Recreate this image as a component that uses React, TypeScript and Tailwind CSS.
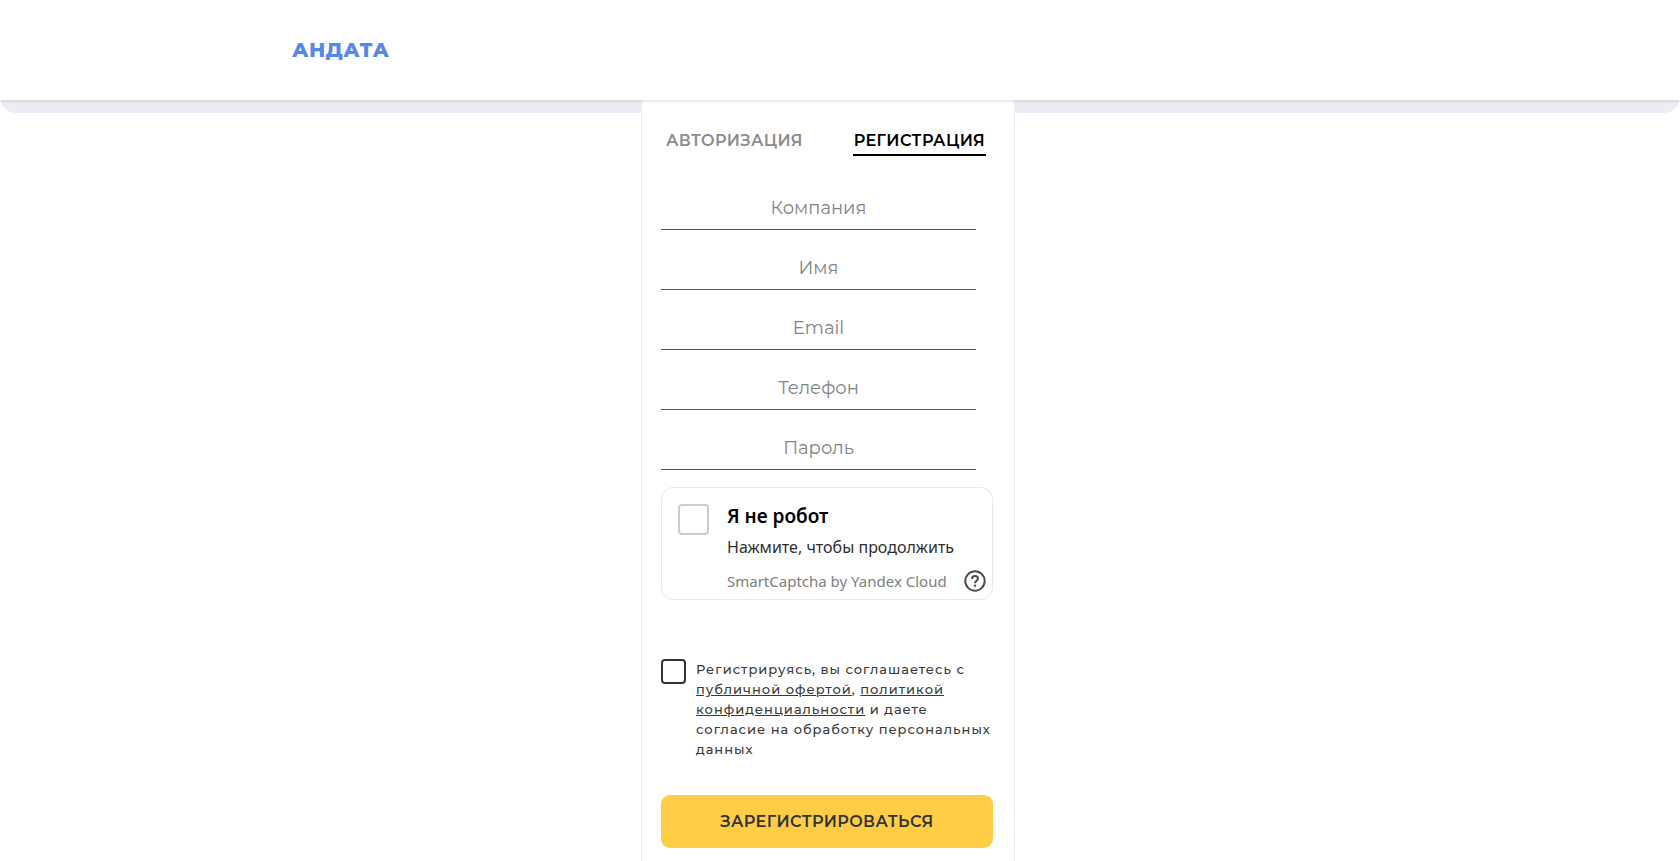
import { useState } from "react";

const fields = [
  { id: "company", label: "Компания", type: "text" },
  { id: "name", label: "Имя", type: "text" },
  { id: "email", label: "Email", type: "email" },
  { id: "phone", label: "Телефон", type: "tel" },
  { id: "password", label: "Пароль", type: "password" },
];

function Header() {
  return (
    <header className="relative z-10 h-[100px] bg-white shadow-[0_2px_2px_rgba(70,70,150,0.12)]">
      <div className="mx-auto flex h-full max-w-[1096px] items-center">
        <a href="#" className="text-xl font-extrabold tracking-wide text-[#5688ea]">АНДАТА</a>
      </div>
    </header>
  );
}

function Tabs() {
  return (
    <div className="flex items-start justify-between pr-[7px] pl-1">
      <button type="button" className="h-8 border-b-2 border-transparent px-px pt-1 text-base font-semibold tracking-wide text-[#8c8c8c]">
        АВТОРИЗАЦИЯ
      </button>
      <button type="button" className="h-8 border-b-2 border-black px-px pt-1 text-base font-semibold tracking-wide text-black">
        РЕГИСТРАЦИЯ
      </button>
    </div>
  );
}

function Captcha() {
  return (
    <div className="mt-[17px] flex h-[113px] rounded-xl border border-[#e8e8e8] pt-4 pl-4 font-['Noto_Sans',sans-serif]">
      <input
        id="robot"
        type="checkbox"
        className="size-[31px] shrink-0 appearance-none rounded border-2 border-[#cccccc] checked:bg-[#5688ea]"
      />
      <div className="ml-[18px] flex-1">
        <label htmlFor="robot" className="block text-[19px] leading-6 font-semibold text-black">Я не робот</label>
        <p className="mt-[7px] text-base leading-6 text-[#2f2f2f]">Нажмите, чтобы продолжить</p>
        <div className="mt-2 flex items-center justify-between pr-[6px]">
          <a href="#" className="text-[15px] leading-7 whitespace-nowrap text-[#808080]">SmartCaptcha by Yandex Cloud</a>
          <button type="button" aria-label="Справка">
            <svg width="22" height="22" viewBox="0 0 22 22" fill="none" stroke="#4d4d4d" strokeWidth="2">
              <circle cx="11" cy="11" r="9.7" />
              <path d="M8 8.9C8 7 9.3 5.9 11 5.9s3 1.1 3 2.7c0 2.1-3 2.3-3 4.6" />
              <circle cx="11" cy="15.8" r="1.2" fill="#4d4d4d" stroke="none" />
            </svg>
          </button>
        </div>
      </div>
    </div>
  );
}

function Terms() {
  return (
    <div className="mt-[59px] flex">
      <input
        id="terms"
        type="checkbox"
        className="size-[25px] shrink-0 appearance-none rounded border-2 border-[#333333] checked:bg-[#ffcc45]"
      />
      <label htmlFor="terms" className="ml-[10px] text-[13px] leading-5 font-medium tracking-[1px] whitespace-nowrap text-[#3a3a3a]">
        Регистрируясь, вы соглашаетесь с<br />
        <a href="#" className="underline">публичной офертой</a>, <a href="#" className="underline">политикой<br />
        конфиденциальности</a> и даете<br />
        согласие на обработку персональных<br />
        данных
      </label>
    </div>
  );
}

export default function App() {
  const [values, setValues] = useState<any>({});

  return (
    <div className="min-h-screen bg-white font-['Montserrat',Inter,sans-serif]">
      <Header />
      <div className="-mt-5 h-[33px] rounded-b-2xl border-b-4 border-[#ecebfc] bg-[#ededf1]" />
      <main className="-mt-[13px] flex justify-center pr-6">
        <form
          className="min-h-[calc(100vh-100px)] w-[374px] border-x border-[#ecebfc] bg-white pt-6 pr-[21px] pb-3 pl-[19px]"
          onSubmit={(e) => e.preventDefault()}
        >
          <Tabs />
          <div className="mt-[30px] flex flex-col gap-4 pr-[17px]">
            {fields.map((field) => (
              <input
                key={field.id}
                id={field.id}
                type={field.type}
                aria-label={field.label}
                placeholder={field.label}
                value={values[field.id] || ""}
                onChange={(e) => setValues({ ...values, [field.id]: e.target.value })}
                className="h-11 w-full border-b border-[#555555] pt-px text-center text-lg outline-none placeholder:text-[#808488]"
              />
            ))}
          </div>
          <Captcha />
          <Terms />
          <button type="submit" className="mt-9 h-[53px] w-full rounded-[9px] bg-[#ffcc45] text-base font-semibold tracking-wide text-[#333333]">
            ЗАРЕГИСТРИРОВАТЬСЯ
          </button>
        </form>
      </main>
    </div>
  );
}
